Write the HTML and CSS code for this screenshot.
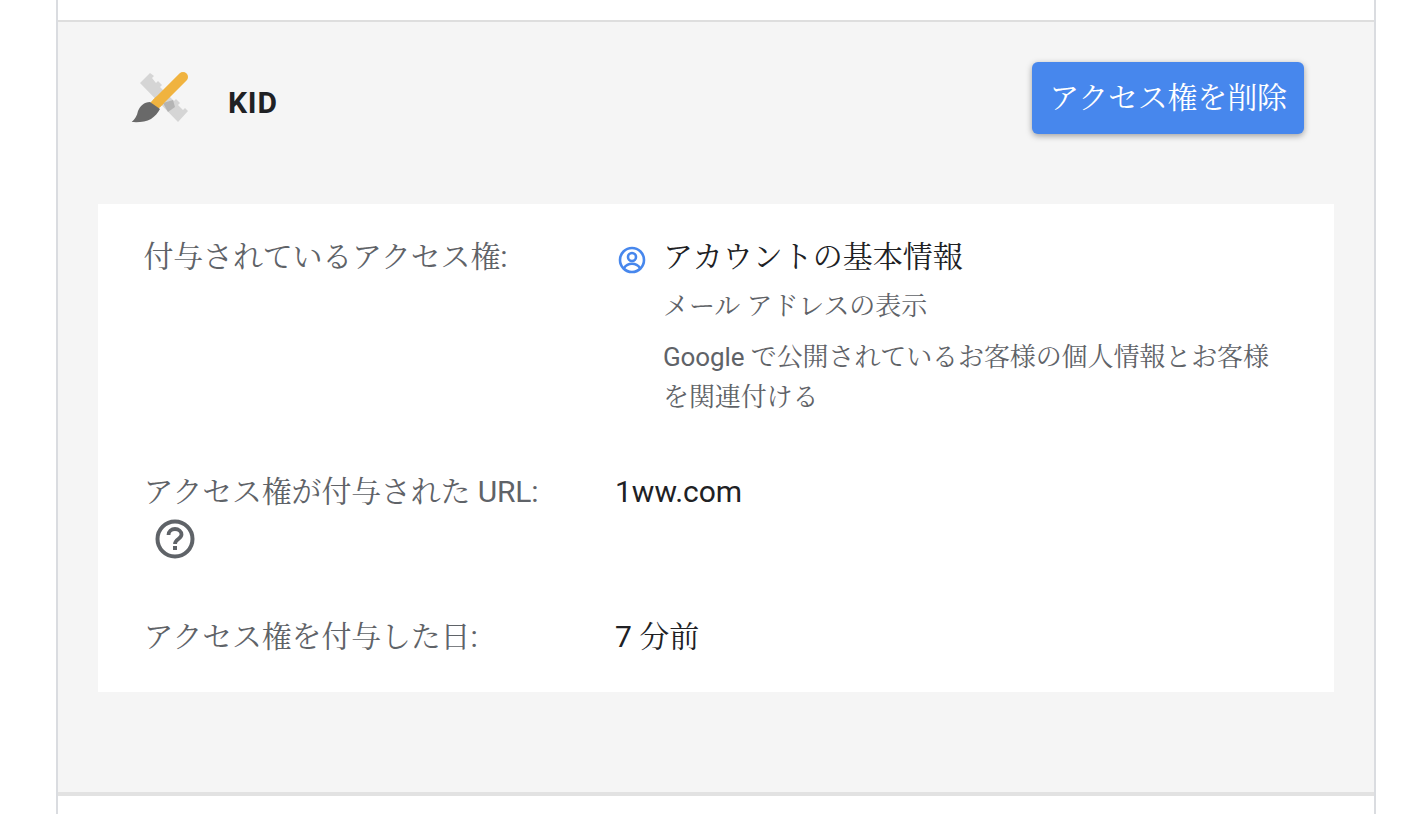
FILE: index.html
```html
<!DOCTYPE html>
<html lang="ja">
<head>
<meta charset="utf-8">
<title>KID</title>
<link rel="stylesheet" href="styles.css">
</head>
<body>
<div class="frame">
  <div class="stub"></div>
  <section class="panel">
    <header class="head">
      <div class="app">
        <svg class="app-icon" width="60" height="60" viewBox="0 0 60 60">
          <path fill="#d5d5d5" d="M10 15L48 54 58 43 55 40 53 42 48 37 50 35 46 31 44 33 39 28 41 26 37 22 35 24 30 19 32 17 28 13 26 15 22 10 24 8 20 5z"/>
          <path fill="#b4b4b4" d="M33 35L43 32 45 39 38 44z"/>
          <path fill="none" stroke="#f0b33f" stroke-width="10" stroke-linecap="round" d="M53 9L27 35"/>
          <path fill="none" stroke="#f0b33f" stroke-width="10" d="M30 32L24 38"/>
          <path fill="#696969" d="M20 34C14 34 10 38 8 43 7 48 5 51 1.700 54 8 54.500 16 54 21 51 25 48 28 45 30 41z"/>
        </svg>
        <h2 class="app-name">KID</h2>
      </div>
      <button class="remove">アクセス権を削除</button>
    </header>
    <div class="card">
      <div class="row">
        <div class="label">付与されているアクセス権:</div>
        <div class="value scope">
          <svg class="scope-icon" width="28" height="28" viewBox="0 0 28 28">
            <circle cx="14" cy="14" r="12" fill="none" stroke="#4787ed" stroke-width="2.600"/>
            <circle cx="14" cy="11" r="4" fill="none" stroke="#4787ed" stroke-width="2.600"/>
            <path fill="none" stroke="#4787ed" stroke-width="2.600" d="M6 22c2-3 5-4.200 8-4.200s6 1.200 8 4.200"/>
          </svg>
          <div class="scope-body">
            <div class="scope-title">アカウントの基本情報</div>
            <div class="sub sub-first">メール アドレスの表示</div>
            <div class="sub sub-next">Google で公開されているお客様の個人情報とお客様を関連付ける</div>
          </div>
        </div>
      </div>
      <div class="row row-url">
        <div class="label">アクセス権が付与された URL:
          <svg class="help" width="40" height="40" viewBox="0 0 40 40">
            <circle cx="20" cy="20" r="17.500" fill="none" stroke="#5f6368" stroke-width="4"/>
            <path fill="none" stroke="#5f6368" stroke-width="3.800" d="M13.500 16c0-3.600 2.900-6 6.500-6s6.500 2.400 6.500 5.500c0 4.500-6.500 4.500-6.500 9.500"/>
            <rect x="18" y="27" width="4" height="4" fill="#5f6368"/>
          </svg>
        </div>
        <div class="value">1ww.com</div>
      </div>
      <div class="row row-date">
        <div class="label">アクセス権を付与した日:</div>
        <div class="value">7 分前</div>
      </div>
    </div>
  </section>
  <div class="stub"></div>
</div>
</body>
</html>
```
FILE: styles.css
```css
* { box-sizing: border-box; }
html, body { margin: 0; height: 814px; overflow: hidden; background: #fff; }
body {
  padding-left: 56px;
  font-family: Roboto, "Noto Serif CJK JP", "Noto Sans CJK JP", sans-serif;
}
.frame {
  width: 1320px;
  height: 814px;
  border-left: 2px solid #dadce0;
  border-right: 2px solid #dadce0;
}
.stub { height: 20px; }
.panel {
  background: #f5f5f5;
  border-top: 2px solid #dedede;
  border-bottom: 4px solid #e2e2e2;
  padding: 40px 40px 100px;
}
.head {
  display: flex;
  justify-content: space-between;
  align-items: flex-start;
  padding: 0 30px 0 32px;
  height: 142px;
}
.app { display: flex; align-items: center; gap: 38px; padding-top: 6px; }
.app-icon { display: block; }
.app-name {
  margin: 0;
  padding-top: 10px;
  font-size: 30px;
  line-height: 40px;
  font-weight: 700;
  letter-spacing: .8px;
  color: #202124;
}
.remove {
  width: 272px;
  height: 72px;
  padding: 0 0 6px;
  border: 0;
  border-radius: 6px;
  background: #4787ed;
  color: #fff;
  font: inherit;
  font-size: 30px;
  letter-spacing: -.2px;
  box-shadow: 0 2px 6px rgba(0, 0, 0, .35);
}
.card {
  background: #fff;
  padding: 33px 40px 35px 47px;
}
.row { display: grid; grid-template-columns: 471px 1fr; }
.row-url { margin-top: 55px; }
.row-date { margin-top: 51px; }
.label {
  margin-left: -1.500px;
  font-size: 30px;
  line-height: 40px;
  letter-spacing: -.2px;
  color: #5f6368;
}
.value { margin-left: -1px; font-size: 30px; line-height: 40px; color: #202124; }
.help { display: block; margin: 7px 0 7px 11.500px; }
.scope { display: flex; gap: 18px; margin-left: 0; }
.scope-icon { display: block; margin: 9px 0 0 2px; flex: none; }
.scope-body { margin-left: -1px; }
.sub { font-size: 26px; line-height: 40px; letter-spacing: -.1px; color: #5f6368; }
.sub-first { margin-top: 9px; }
.sub-next { margin-top: 11px; width: 620px; }
```
